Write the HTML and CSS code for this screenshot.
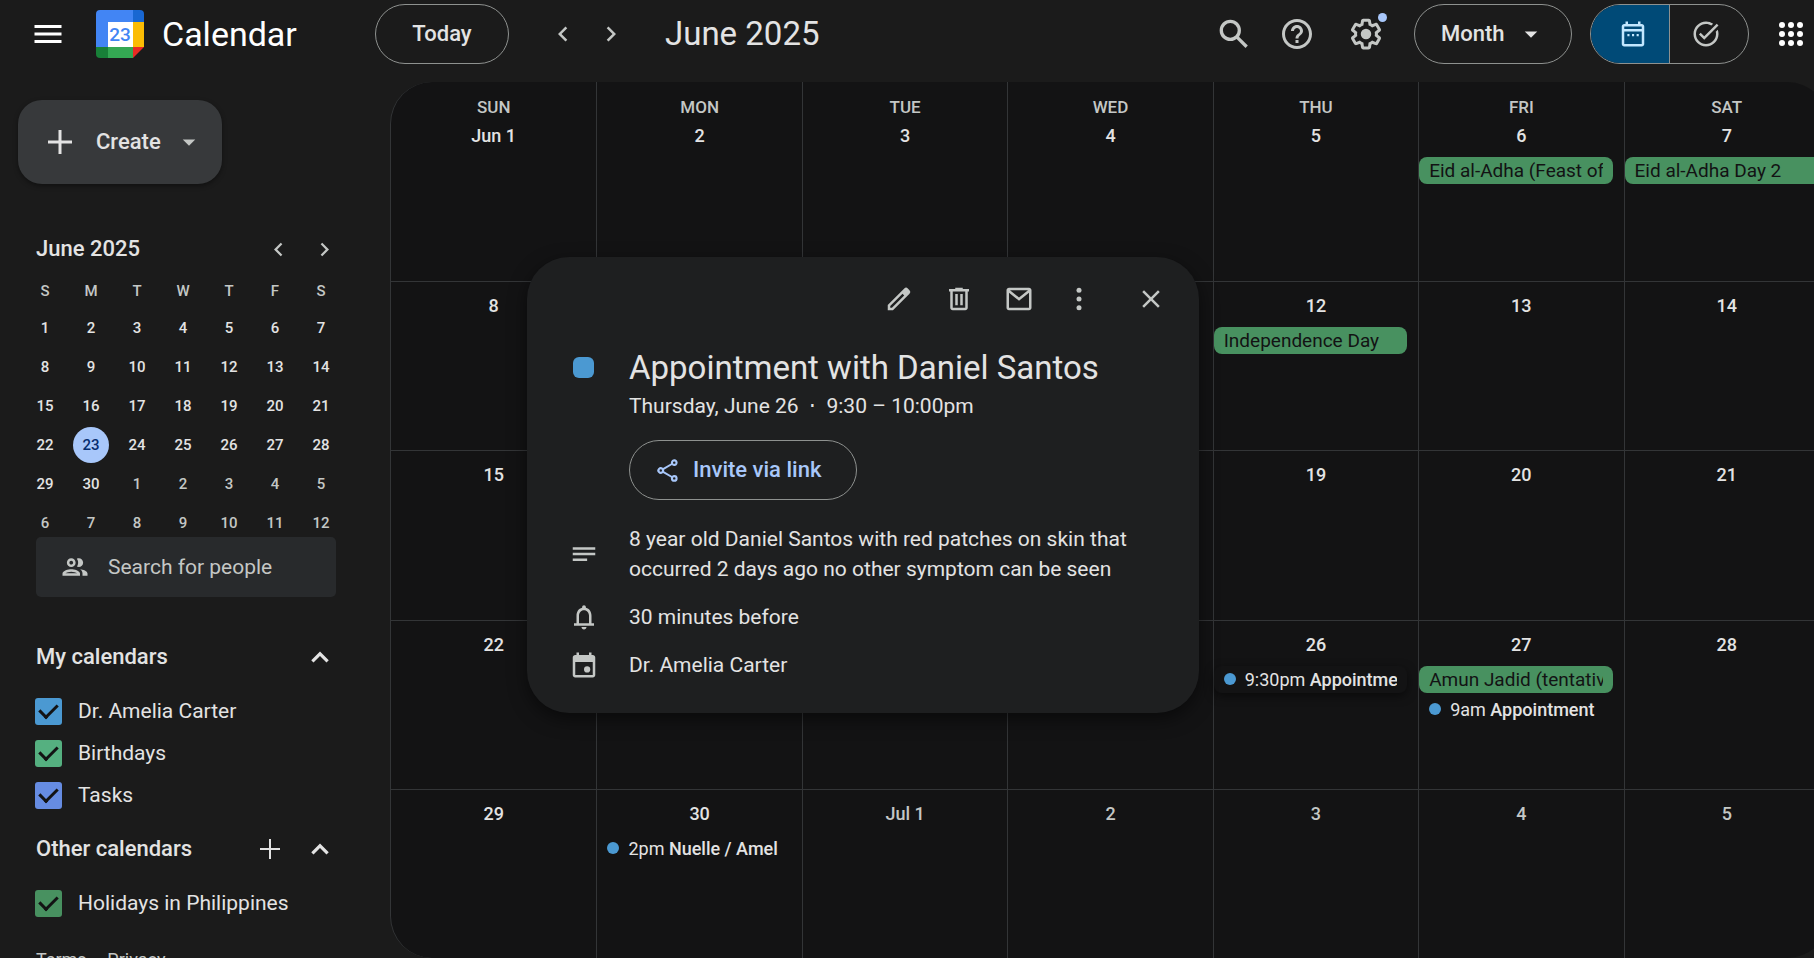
FILE: index.html
```html
<!DOCTYPE html>
<html lang="en">
<head>
<meta charset="utf-8">
<title>Calendar - June 2025</title>
<link rel="stylesheet" href="styles.css">
</head>
<body>
<header class="topbar">
  <div class="brand">
    <button class="icon-btn menu-btn" aria-label="Main menu"><svg class="icon-36 bright" viewBox="0 0 24 24"><path d="M3 18h18v-2H3v2zm0-5h18v-2H3v2zm0-7v2h18V6H3z"/></svg></button>
    <svg class="logo" viewBox="0 0 48 48" aria-hidden="true">
      <path fill="#4285f4" d="M4 0h33v12H12v25H0V4a4 4 0 0 1 4-4z"/>
      <path fill="#1967d2" d="M37 0h7a4 4 0 0 1 4 4v8H37z"/>
      <path fill="#fbbc04" d="M37 12h11v25H37z"/>
      <path fill="#fff" d="M12 12h25v25H12z"/>
      <path fill="#188038" d="M0 37h12v11H4a4 4 0 0 1-4-4z"/>
      <path fill="#34a853" d="M12 37h25v11H12z"/>
      <path fill="#ea2a24" d="M37 37h11L37 48z"/>
      <text class="logo-day" x="24" y="31" text-anchor="middle">23</text>
    </svg>
    <span class="brand-name">Calendar</span>
  </div>
  <button class="pill today">Today</button>
  <div class="pager">
    <button class="icon-btn" aria-label="Previous month"><svg class="icon-30" viewBox="0 0 24 24"><path d="M15.41 7.41 14 6l-6 6 6 6 1.41-1.41L10.83 12z"/></svg></button>
    <button class="icon-btn" aria-label="Next month"><svg class="icon-30" viewBox="0 0 24 24"><path d="M10 6 8.59 7.41 13.17 12l-4.58 4.59L10 18l6-6z"/></svg></button>
  </div>
  <h1 class="period">June 2025</h1>
  <div class="tools">
    <button class="icon-btn" aria-label="Search"><svg class="icon-36 stroked" viewBox="0 0 24 24"><circle cx="10.200" cy="9.600" r="6"/><path d="M14.500 13.900l6.600 6.600"/></svg></button>
    <button class="icon-btn" aria-label="Help"><svg class="icon-36" viewBox="0 0 24 24"><path d="M11 18h2v-2h-2v2zm1-16C6.48 2 2 6.48 2 12s4.48 10 10 10 10-4.48 10-10S17.52 2 12 2zm0 18c-4.41 0-8-3.59-8-8s3.59-8 8-8 8 3.59 8 8-3.59 8-8 8zm0-14c-2.21 0-4 1.79-4 4h2c0-1.1.9-2 2-2s2 .9 2 2c0 2-3 1.75-3 5h2c0-2.25 3-2.5 3-5 0-2.21-1.79-4-4-4z"/></svg></button>
    <button class="icon-btn settings" aria-label="Settings"><svg class="icon-36" viewBox="0 0 24 24"><path d="M13.85 22.25h-3.7c-.74 0-1.36-.54-1.45-1.27l-.27-1.89c-.27-.14-.53-.29-.79-.46l-1.8.72c-.7.26-1.47-.03-1.81-.65L2.2 15.53c-.35-.66-.2-1.44.36-1.88l1.53-1.19c-.01-.15-.02-.3-.02-.46 0-.15.01-.31.02-.46l-1.52-1.19c-.59-.45-.74-1.26-.37-1.88l1.85-3.19c.34-.62 1.11-.9 1.79-.63l1.81.73c.26-.17.52-.32.78-.46l.27-1.91c.09-.7.71-1.25 1.44-1.25h3.7c.74 0 1.36.54 1.45 1.27l.27 1.89c.27.14.53.29.79.46l1.8-.72c.71-.26 1.48.03 1.82.65l1.84 3.18c.36.66.2 1.44-.36 1.88l-1.52 1.19c.01.15.02.3.02.46s-.01.31-.02.46l1.52 1.19c.56.45.72 1.23.37 1.86l-1.86 3.22c-.34.62-1.11.9-1.8.63l-1.8-.72c-.26.17-.52.32-.78.46l-.27 1.91c-.1.68-.72 1.22-1.46 1.22zm-3.23-2h2.76l.37-2.55.53-.22c.44-.18.88-.44 1.34-.78l.45-.34 2.38.96 1.38-2.4-2.03-1.58.07-.56c.03-.26.06-.51.06-.78s-.03-.53-.06-.78l-.07-.56 2.03-1.58-1.39-2.4-2.39.96-.45-.35c-.42-.32-.87-.58-1.33-.77l-.52-.22-.37-2.55h-2.76l-.37 2.55-.53.21c-.44.19-.88.44-1.34.79l-.45.33-2.38-.95-1.39 2.39 2.03 1.58-.07.56a7 7 0 0 0-.06.79c0 .26.02.53.06.78l.07.56-2.03 1.58 1.38 2.4 2.39-.96.45.35c.43.33.86.58 1.33.77l.53.22.38 2.55z"/><circle cx="12" cy="12" r="3.5"/></svg><span class="notice-dot"></span></button>
    <div class="select-wrap">
      <select class="pill view-select" aria-label="View"><option>Month</option><option>Week</option><option>Day</option></select>
      <svg class="select-arrow icon-30" viewBox="0 0 24 24"><path d="M7 10l5 5 5-5z"/></svg>
    </div>
    <div class="toggle">
      <button class="toggle-btn active" aria-label="Calendar view"><svg class="icon-30" viewBox="0 0 24 24"><path d="M19 4h-1V2h-2v2H8V2H6v2H5c-1.1 0-2 .9-2 2v14c0 1.1.9 2 2 2h14c1.1 0 2-.9 2-2V6c0-1.100-.9-2-2-2zm0 16H5V10h14v10zm0-12H5V6h14v2zM7.500 12h1.700v1.700H7.500zm3.700 0h1.700v1.700h-1.700zm3.700 0h1.700v1.700h-1.700z"/></svg></button>
      <button class="toggle-btn" aria-label="Tasks view"><svg class="icon-30" viewBox="0 0 24 24"><path d="M22 5.180 10.590 16.600l-4.240-4.240 1.410-1.410 2.830 2.830 10-10L22 5.180zM19.790 10.220c.13.570.21 1.170.21 1.780 0 4.420-3.580 8-8 8s-8-3.580-8-8 3.580-8 8-8c1.580 0 3.040.46 4.280 1.250l1.440-1.440A9.900 9.900 0 0 0 12 2C6.480 2 2 6.480 2 12s4.480 10 10 10 10-4.480 10-10c0-1.190-.22-2.330-.6-3.390l-1.610 1.610z"/></svg></button>
    </div>
    <button class="icon-btn" aria-label="Google apps"><svg class="icon-36 bright" viewBox="0 0 24 24"><circle cx="6" cy="6" r="2"/><circle cx="12" cy="6" r="2"/><circle cx="18" cy="6" r="2"/><circle cx="6" cy="12" r="2"/><circle cx="12" cy="12" r="2"/><circle cx="18" cy="12" r="2"/><circle cx="6" cy="18" r="2"/><circle cx="12" cy="18" r="2"/><circle cx="18" cy="18" r="2"/></svg></button>
  </div>
</header>

<div class="body">
  <aside class="sidebar">
    <button class="create"><svg class="icon-36" viewBox="0 0 24 24"><path d="M20 13h-7v7h-2v-7H4v-2h7V4h2v7h7v2z"/></svg><span>Create</span><svg class="icon-30 caret" viewBox="0 0 24 24"><path d="M7 10l5 5 5-5z"/></svg></button>

    <div class="mini-head">
      <h2 class="mini-title">June 2025</h2>
      <button class="icon-btn mini-nav" aria-label="Previous month"><svg class="icon-27" viewBox="0 0 24 24"><path d="M15.41 7.41 14 6l-6 6 6 6 1.41-1.41L10.83 12z"/></svg></button>
      <button class="icon-btn mini-nav" aria-label="Next month"><svg class="icon-27" viewBox="0 0 24 24"><path d="M10 6 8.59 7.41 13.17 12l-4.58 4.59L10 18l6-6z"/></svg></button>
    </div>
    <table class="mini">
      <thead><tr><th>S</th><th>M</th><th>T</th><th>W</th><th>T</th><th>F</th><th>S</th></tr></thead>
      <tbody>
        <tr><td>1</td><td>2</td><td>3</td><td>4</td><td>5</td><td>6</td><td>7</td></tr>
        <tr><td>8</td><td>9</td><td>10</td><td>11</td><td>12</td><td>13</td><td>14</td></tr>
        <tr><td>15</td><td>16</td><td>17</td><td>18</td><td>19</td><td>20</td><td>21</td></tr>
        <tr><td>22</td><td><span class="current">23</span></td><td>24</td><td>25</td><td>26</td><td>27</td><td>28</td></tr>
        <tr><td>29</td><td>30</td><td class="other">1</td><td class="other">2</td><td class="other">3</td><td class="other">4</td><td class="other">5</td></tr>
        <tr><td class="other">6</td><td class="other">7</td><td class="other">8</td><td class="other">9</td><td class="other">10</td><td class="other">11</td><td class="other">12</td></tr>
      </tbody>
    </table>

    <label class="people">
      <svg class="icon-30" viewBox="0 0 24 24"><path d="M9 12c1.930 0 3.500-1.570 3.500-3.500S10.930 5 9 5 5.500 6.570 5.500 8.500 7.070 12 9 12zm0-5c.83 0 1.500.67 1.500 1.500S9.830 10 9 10s-1.500-.67-1.500-1.500S8.170 7 9 7zm0 6.750c-2.340 0-7 1.170-7 3.500V19h14v-1.750c0-2.330-4.660-3.500-7-3.500zM4.340 17c.84-.58 2.870-1.250 4.660-1.250s3.820.67 4.660 1.250H4.340zm11.700-3.190c1.160.84 1.960 1.960 1.960 3.440V19h4v-1.750c0-2.020-3.500-3.170-5.960-3.440zM15 12c1.930 0 3.500-1.570 3.500-3.500S16.930 5 15 5c-.54 0-1.040.13-1.500.35.630.89 1 1.980 1 3.150s-.37 2.260-1 3.150c.46.22.96.35 1.500.35z"/></svg>
      <input class="people-input" type="text" placeholder="Search for people" aria-label="Search for people">
    </label>

    <section class="cal-group">
      <div class="group-head">
        <h2>My calendars</h2>
        <button class="icon-btn group-btn" aria-label="Collapse my calendars"><svg class="icon-30" viewBox="0 0 24 24"><path d="M12 7.500l-7 7 1.800 1.800 5.200-5.200 5.200 5.200 1.800-1.800z"/></svg></button>
      </div>
      <label class="cal-item"><input class="check blue" type="checkbox" checked><span>Dr. Amelia Carter</span></label>
      <label class="cal-item"><input class="check mint" type="checkbox" checked><span>Birthdays</span></label>
      <label class="cal-item"><input class="check violet" type="checkbox" checked><span>Tasks</span></label>
    </section>
    <section class="cal-group">
      <div class="group-head">
        <h2>Other calendars</h2>
        <button class="icon-btn group-btn" aria-label="Add other calendars"><svg class="icon-30" viewBox="0 0 24 24"><path d="M20 12.700h-7.200V20h-1.600v-7.300H4v-1.500h7.200V4h1.600v7.200H20z"/></svg></button>
        <button class="icon-btn group-btn" aria-label="Collapse other calendars"><svg class="icon-30" viewBox="0 0 24 24"><path d="M12 7.500l-7 7 1.800 1.800 5.200-5.200 5.200 5.200 1.800-1.800z"/></svg></button>
      </div>
      <label class="cal-item"><input class="check green" type="checkbox" checked><span>Holidays in Philippines</span></label>
    </section>
    <div class="legal"><a href="#terms">Terms</a> – <a href="#privacy">Privacy</a></div>
  </aside>

  <main class="month">
    <div class="week-head"><div>SUN</div><div>MON</div><div>TUE</div><div>WED</div><div>THU</div><div>FRI</div><div>SAT</div></div>
    <div class="week">
      <div class="day"><h3>Jun 1</h3></div>
      <div class="day"><h3>2</h3></div>
      <div class="day"><h3>3</h3></div>
      <div class="day"><h3>4</h3></div>
      <div class="day"><h3>5</h3></div>
      <div class="day"><h3>6</h3><button class="event all-day"><span class="clip">Eid al-Adha (Feast of</span></button></div>
      <div class="day"><h3>7</h3><button class="event all-day wide"><span class="clip">Eid al-Adha Day 2</span></button></div>
    </div>
    <div class="week">
      <div class="day"><h3>8</h3></div>
      <div class="day"><h3>9</h3></div>
      <div class="day"><h3>10</h3></div>
      <div class="day"><h3>11</h3></div>
      <div class="day"><h3>12</h3><button class="event all-day"><span class="clip">Independence Day</span></button></div>
      <div class="day"><h3>13</h3></div>
      <div class="day"><h3>14</h3></div>
    </div>
    <div class="week">
      <div class="day"><h3>15</h3></div>
      <div class="day"><h3>16</h3></div>
      <div class="day"><h3>17</h3></div>
      <div class="day"><h3>18</h3></div>
      <div class="day"><h3>19</h3></div>
      <div class="day"><h3>20</h3></div>
      <div class="day"><h3>21</h3></div>
    </div>
    <div class="week">
      <div class="day"><h3>22</h3></div>
      <div class="day"><h3>23</h3></div>
      <div class="day"><h3>24</h3></div>
      <div class="day"><h3>25</h3></div>
      <div class="day"><h3>26</h3><button class="event timed raised"><span class="dot"></span><span class="clip">9:30pm <b>Appointment</b></span></button></div>
      <div class="day"><h3>27</h3><button class="event all-day"><span class="clip">Amun Jadid (tentative)</span></button><button class="event timed"><span class="dot"></span><span class="clip">9am <b>Appointment</b></span></button></div>
      <div class="day"><h3>28</h3></div>
    </div>
    <div class="week">
      <div class="day"><h3>29</h3></div>
      <div class="day"><h3>30</h3><button class="event timed"><span class="dot"></span><span class="clip">2pm <b>Nuelle / Amel</b></span></button></div>
      <div class="day other"><h3>Jul 1</h3></div>
      <div class="day other"><h3>2</h3></div>
      <div class="day other"><h3>3</h3></div>
      <div class="day other"><h3>4</h3></div>
      <div class="day other"><h3>5</h3></div>
    </div>

    <section class="popup" role="dialog" aria-label="Event details">
      <div class="popup-tools">
        <button class="icon-btn" aria-label="Edit event"><svg class="icon-30" viewBox="0 0 24 24"><path d="M20.410 4.940l-1.350-1.350a2 2 0 0 0-2.830 0L3 16.820V21h4.180L20.410 7.770a2 2 0 0 0 0-2.830zM6.350 19H5v-1.350l9.820-9.820 1.350 1.350L6.350 19z"/></svg></button>
        <button class="icon-btn" aria-label="Delete event"><svg class="icon-30" viewBox="0 0 24 24"><path d="M15 4V3H9v1H4v2h1v13c0 1.100.9 2 2 2h10c1.100 0 2-.9 2-2V6h1V4h-5zm2 15H7V6h10v13zM9 8h2v9H9zm4 0h2v9h-2z"/></svg></button>
        <button class="icon-btn" aria-label="Email event details"><svg class="icon-30" viewBox="0 0 24 24"><path d="M20 3H4c-1.100 0-2 .9-2 2v14c0 1.100.9 2 2 2h16c1.100 0 2-.9 2-2V5c0-1.100-.9-2-2-2zm-.8 2L12 10.800 4.800 5h14.400zM4 19V6.900l8 6.500 8-6.500V19H4z"/></svg></button>
        <button class="icon-btn" aria-label="Options"><svg class="icon-30" viewBox="0 0 24 24"><circle cx="12" cy="5" r="2"/><circle cx="12" cy="12" r="2"/><circle cx="12" cy="19" r="2"/></svg></button>
        <button class="icon-btn close" aria-label="Close"><svg class="icon-30" viewBox="0 0 24 24"><path d="M19 6.410 17.590 5 12 10.590 6.410 5 5 6.410 10.590 12 5 17.590 6.410 19 12 13.410 17.590 19 19 17.590 13.410 12z"/></svg></button>
      </div>
      <div class="detail summary">
        <span class="swatch"></span>
        <div>
          <h2 class="popup-title">Appointment with Daniel Santos</h2>
          <p class="when">Thursday, June 26 &nbsp;⋅&nbsp; 9:30 – 10:00pm</p>
          <button class="pill invite"><svg class="icon-27" viewBox="0 0 24 24"><path d="M18 16c-.79 0-1.500.31-2.030.81L8.910 12.700c.05-.23.09-.46.09-.7s-.04-.47-.09-.7l7.050-4.110A3 3 0 1 0 15 5c0 .24.04.47.09.7L8.040 9.810A3 3 0 1 0 8.040 14.190l7.060 4.120c-.06.22-.1.450-.1.690a3 3 0 1 0 3-3zM18 3.900a1.100 1.100 0 1 1 0 2.200 1.100 1.100 0 0 1 0-2.200zM6 13.100a1.100 1.100 0 1 1 0-2.200 1.100 1.100 0 0 1 0 2.200zm12 7a1.100 1.100 0 1 1 0-2.200 1.100 1.100 0 0 1 0 2.200z"/></svg>Invite via link</button>
        </div>
      </div>
      <div class="detail notes">
        <svg class="icon-30" viewBox="0 0 24 24"><path d="M14.500 17.500H3v-2h11.500zM21 13H3v-2h18zm0-4.500H3v-2h18z"/></svg>
        <p>8 year old Daniel Santos with red patches on skin that occurred 2 days ago no other symptom can be seen</p>
      </div>
      <div class="detail">
        <svg class="icon-30" viewBox="0 0 24 24"><path d="M18 17v-6c0-3.070-1.630-5.640-4.500-6.320V4c0-.83-.67-1.500-1.500-1.500s-1.500.67-1.500 1.500v.68C7.640 5.360 6 7.920 6 11v6H4v2h16v-2h-2zm-2 0H8v-6c0-2.480 1.510-4.500 4-4.500s4 2.020 4 4.500v6zm-4 5c1.100 0 2-.9 2-2h-4c0 1.100.9 2 2 2z"/></svg>
        <p>30 minutes before</p>
      </div>
      <div class="detail">
        <svg class="icon-30" viewBox="0 0 24 24"><path d="M19 4h-1V2h-2v2H8V2H6v2H5c-1.100 0-2 .9-2 2v14c0 1.100.9 2 2 2h14c1.100 0 2-.9 2-2V6c0-1.100-.9-2-2-2zm0 16H5V9.500h14V20z"/><circle cx="14.500" cy="15.500" r="2.500"/></svg>
        <p>Dr. Amelia Carter</p>
      </div>
    </section>
  </main>
</div>
</body>
</html>
```

FILE: styles.css
```css
* { box-sizing: border-box; }

body {
  margin: 0;
  height: 100vh;
  overflow: hidden;
  display: flex;
  flex-direction: column;
  background: #1b1b1b;
  color: #e3e3e3;
  font-family: Roboto, "Liberation Sans", sans-serif;
  font-size: 21px;
  line-height: 30px;
}

h1, h2, h3, p { margin: 0; font-size: inherit; font-weight: 400; }

button, input, select { font: inherit; color: inherit; }

button {
  margin: 0;
  padding: 0;
  border: 0;
  background: none;
  cursor: pointer;
}

svg { display: block; flex: none; fill: #c4c7c5; }
.icon-27 { width: 27px; height: 27px; }
.icon-30 { width: 30px; height: 30px; }
.icon-36 { width: 36px; height: 36px; }
.bright { fill: #fff; }
.stroked { fill: none; stroke: #c4c7c5; stroke-width: 2.2; }

.icon-btn {
  display: grid;
  place-items: center;
  width: 48px;
  height: 48px;
  border-radius: 50%;
}

.pill {
  height: 60px;
  border: 1px solid #8e918f;
  border-radius: 30px;
  background: transparent;
  font-size: 22px;
  font-weight: 500;
}

/* Top bar */
.topbar {
  display: flex;
  align-items: center;
  height: 82px;
  padding: 0 0 14px 24px;
}
.brand { display: flex; align-items: center; width: 351px; }
.logo { width: 48px; height: 48px; margin: 0 18px 0 24px; }
.logo-day { fill: #4285f4; font-size: 19px; font-weight: 500; }
.brand-name { color: #fff; font-size: 34px; }
.today { width: 134px; }
.pager { display: flex; margin-left: 30px; }
.period { margin-left: 30px; font-size: 33px; }
.tools { display: flex; align-items: center; margin-left: auto; }
.tools > .icon-btn { margin-right: 16px; }
.tools > .settings { position: relative; margin: 0 24px 0 5px; }
.tools > .icon-btn:last-child { margin: 0 -1px 0 18px; }
.notice-dot {
  position: absolute;
  top: 3px;
  right: 3px;
  width: 9px;
  height: 9px;
  border-radius: 50%;
  background: #a8c7fa;
}
.select-wrap { display: grid; align-items: center; width: 158px; margin-right: 18px; }
.select-wrap > * { grid-area: 1 / 1; }
.view-select { appearance: none; width: 100%; padding: 0 26px; }
.view-select option { background: #1e1f20; }
.select-arrow { justify-self: end; margin-right: 26px; fill: #e3e3e3; pointer-events: none; }
.toggle {
  display: flex;
  width: 159px;
  height: 60px;
  border: 1px solid #8e918f;
  border-radius: 30px;
  overflow: hidden;
}
.toggle-btn { flex: 1; display: grid; place-items: center; padding-right: 6px; }
.toggle-btn.active { border-right: 1px solid #8e918f; background: #004a77; padding: 0 0 0 6px; }
.toggle-btn.active svg { fill: #c2e7ff; }

/* Layout below the top bar */
.body { flex: 1; min-height: 0; display: flex; }

/* Sidebar */
.sidebar {
  flex: none;
  width: 390px;
  padding: 18px 54px 0 36px;
  overflow: hidden;
}
.create {
  display: flex;
  align-items: center;
  width: 204px;
  height: 84px;
  margin-left: -18px;
  padding-left: 24px;
  border-radius: 24px;
  background: #37393b;
  box-shadow: 0 2px 5px rgba(0, 0, 0, 0.4);
  font-size: 22px;
  font-weight: 500;
}
.create svg { fill: #e3e3e3; }
.create span { margin: 0 13px 0 18px; }
.create .caret { fill: #c4c7c5; }

.mini-head { display: flex; align-items: center; height: 48px; margin-top: 41px; }
.mini-title { flex: 1; font-size: 22px; font-weight: 500; }
.mini-nav { width: 46px; }
.mini-head .mini-nav:last-child { margin-right: -11px; }
.mini {
  width: 322px;
  margin: 2px 0 -5px -14px;
  border-collapse: collapse;
  table-layout: fixed;
  font-size: 15px;
  line-height: 36px;
  text-align: center;
}
.mini th, .mini td { height: 39px; padding: 0; font-weight: 500; }
.mini th { height: 33px; line-height: 33px; color: #c4c7c5; }
.mini .other { color: #c4c7c5; }
.current {
  display: block;
  width: 36px;
  height: 36px;
  margin: 0 auto;
  border-radius: 50%;
  background: #a8c7fa;
  color: #062e6f;
}

.people {
  display: flex;
  align-items: center;
  gap: 18px;
  height: 60px;
  padding-left: 24px;
  border-radius: 5px;
  background: #282a2c;
}
.people-input {
  flex: 1;
  min-width: 0;
  padding: 0;
  border: 0;
  outline: 0;
  background: transparent;
}
.people-input::placeholder { color: #c4c7c5; opacity: 1; }

.cal-group { margin-top: 36px; }
.cal-group + .cal-group { margin-top: 9px; }
.group-head { display: flex; align-items: center; height: 48px; margin: 0 -9px 9px 0; }
.group-head h2 { flex: 1; font-size: 22px; font-weight: 500; }
.group-head svg { fill: #e3e3e3; }
.group-btn { width: 50px; }
.cal-item { display: flex; align-items: center; gap: 16px; height: 42px; }
.cal-item .check { margin: 0 0 0 -1px; }
.check {
  appearance: none;
  flex: none;
  display: grid;
  place-items: center;
  width: 27px;
  height: 27px;
  border-radius: 3px;
}
.check:checked::before {
  content: "";
  width: 8px;
  height: 15px;
  margin-bottom: 5px;
  border: solid #131314;
  border-width: 0 3px 3px 0;
  transform: rotate(45deg);
}
.blue { background: #4b99d2; }
.mint { background: #55b080; }
.violet { background: #668ce2; }
.green { background: #489160; }
.legal { margin-top: 21px; color: #c4c7c5; font-size: 18px; }
.legal a { color: inherit; text-decoration: none; }

/* Month grid */
.month {
  position: relative;
  flex: 1;
  min-width: 0;
  display: grid;
  grid-template-rows: 30px repeat(5, 1fr);
  margin-right: -15px;
  border-left: 1px solid #333537;
  border-radius: 42px;
  background: #131314;
}
.week-head, .week { display: grid; grid-template-columns: repeat(7, minmax(0, 1fr)); }
.week-head > div {
  padding-top: 15px;
  color: #c4c7c5;
  font-size: 17px;
  font-weight: 500;
  line-height: 20px;
  text-align: center;
}
.week-head > div + div, .day + .day { border-left: 1px solid #333537; }
.week + .week { border-top: 1px solid #333537; }
.day { padding-top: 12px; }
.day h3 {
  margin-bottom: 9px;
  font-size: 18px;
  font-weight: 500;
  line-height: 24px;
  text-align: center;
}
.day.other h3 { color: #c4c7c5; }
.event {
  display: flex;
  align-items: center;
  width: calc(100% - 11px);
  height: 27px;
  margin-bottom: 3px;
  padding: 0 10px;
  border-radius: 8px;
  font-size: 18px;
  line-height: 27px;
  text-align: left;
}
.all-day { background: #489160; color: #131314; font-size: 19px; }
.wide { width: 100%; }
.raised { box-shadow: 0 3px 10px rgba(0, 0, 0, 0.5); }
.clip { flex: 1; overflow: hidden; white-space: nowrap; }
.dot { flex: none; width: 12px; height: 12px; margin-right: 9px; border-radius: 50%; background: #4b99d2; }
.event b { font-weight: 500; }

/* Event details */
.popup {
  position: absolute;
  top: 175px;
  left: 136px;
  width: 672px;
  padding: 18px 24px 15px 42px;
  border-radius: 42px;
  background: #1e1f20;
  box-shadow: 0 6px 18px rgba(0, 0, 0, 0.5);
}
.popup-tools { display: flex; justify-content: flex-end; gap: 12px; }
.popup-tools .close { margin-left: 12px; }
.detail { display: flex; align-items: center; gap: 30px; margin-bottom: 18px; }
.summary { align-items: flex-start; margin: 26px 0 24px; }
.swatch { flex: none; width: 21px; height: 21px; margin: 8px 5px 0 4px; border-radius: 6px; background: #4b99d2; }
.popup-title { font-size: 33px; line-height: 38px; }
.when { margin: 4px 0 19px; }
.invite {
  display: flex;
  align-items: center;
  gap: 12px;
  padding: 0 35px 0 24px;
  color: #a8c7fa;
}
.invite svg { fill: #a8c7fa; }
```
